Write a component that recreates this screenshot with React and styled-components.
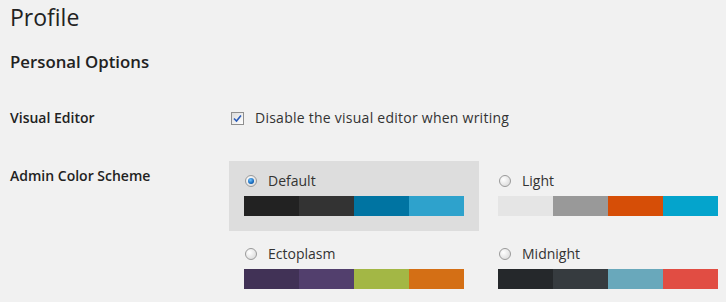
import React from 'react'
import styled, { createGlobalStyle } from 'styled-components'

const Global = createGlobalStyle`
  body {
    margin: 0;
    background: #f1f1f1;
    font-family: "Open Sans", sans-serif;
    color: #333;
  }
`

const Wrap = styled.div`
  padding: 3px 10px 0;
`

const Title = styled.h1`
  margin: 0;
  font-size: 23px;
  font-weight: 400;
  line-height: 29px;
  color: #222;
`

const Section = styled.h2`
  margin: 20px 0 0;
  font-size: 16.8px;
  font-weight: 600;
  line-height: 20px;
  color: #222;
`

const Row = styled.div`
  display: grid;
  grid-template-columns: 219px 1fr;
  align-items: start;
  margin-top: ${p => p.$top}px;
`

const Th = styled.div`
  font-size: 14px;
  font-weight: 600;
  line-height: 20px;
  color: #222;
  padding-top: ${p => p.$pad || 0}px;
`

const CheckLine = styled.label`
  display: flex;
  align-items: center;
  gap: 11px;
  padding-left: 2px;
  font-size: 14px;
  line-height: 20px;
  letter-spacing: 0.25px;
  color: #333;
`

const Box = styled.span`
  width: 11px;
  height: 11px;
  border: 1px solid #8f8f8f;
  background: linear-gradient(135deg, #dcdcdc, #fff);
  display: flex;
  align-items: center;
  justify-content: center;
`

const Schemes = styled.div`
  display: grid;
  grid-template-columns: repeat(2, 250px);
  column-gap: 4px;
  row-gap: 3px;
`

const Option = styled.div`
  padding: 5px 15px 15px;
  background: ${p => (p.$active ? '#dddddd' : 'transparent')};
`

const OptionLabel = styled.div`
  display: flex;
  align-items: center;
  gap: 11px;
  height: 30px;
  padding-left: 1px;
  font-size: 14px;
  color: #333;
  span:last-child {
    margin-top: -1px;
  }
`

const Radio = styled.span`
  width: 10px;
  height: 10px;
  border-radius: 50%;
  border: 1px solid #9a9a9a;
  background: radial-gradient(circle at 35% 35%, #fff, #d4d4d4);
  display: flex;
  align-items: center;
  justify-content: center;
  &::after {
    content: '';
    display: ${p => (p.$on ? 'block' : 'none')};
    width: 6px;
    height: 6px;
    border-radius: 50%;
    background: radial-gradient(circle at 40% 35%, #6fc3ff, #0a5bb0 70%, #0b3f7a);
  }
`

const Palette = styled.div`
  display: flex;
  height: 20px;
`

const Swatch = styled.div`
  width: 55px;
  background: ${p => p.$c};
`

const schemes = [
  { name: 'Default', colors: ['#222222', '#333333', '#0074a2', '#2ea2cc'], on: true },
  { name: 'Light', colors: ['#e5e5e5', '#999999', '#d64e07', '#04a4cc'] },
  { name: 'Ectoplasm', colors: ['#413256', '#523f6d', '#a3b745', '#d46f15'] },
  { name: 'Midnight', colors: ['#25282b', '#363b3f', '#69a8bb', '#e14d43'] }
]

export default function App () {
  return (
    <Wrap>
      <Global />
      <Title>Profile</Title>
      <Section>Personal Options</Section>
      <Row $top={36}>
        <Th>Visual Editor</Th>
        <CheckLine>
          <Box>
            <svg width="9" height="9" viewBox="0 0 9 9">
              <path d="M1 4.5 L3.5 7 L8 1.5" fill="none" stroke="#2a5bb8" strokeWidth="1.6" />
            </svg>
          </Box>
          <span>Disable the visual editor when writing</span>
        </CheckLine>
      </Row>
      <Row $top={33}>
        <Th $pad={5}>Admin Color Scheme</Th>
        <Schemes>
          {schemes.map(s => (
            <Option key={s.name} $active={s.on}>
              <OptionLabel>
                <Radio $on={s.on} />
                <span>{s.name}</span>
              </OptionLabel>
              <Palette>
                {s.colors.map(c => <Swatch key={c} $c={c} />)}
              </Palette>
            </Option>
          ))}
        </Schemes>
      </Row>
    </Wrap>
  )
}
